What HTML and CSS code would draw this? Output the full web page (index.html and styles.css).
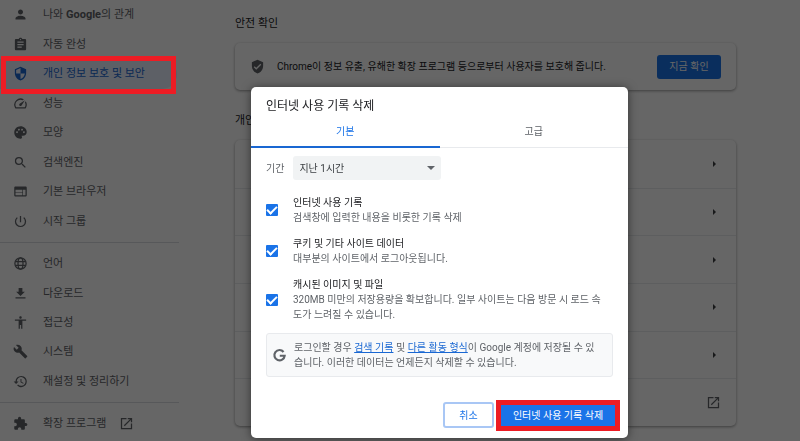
FILE: index.html
```html
<!DOCTYPE html>
<html lang="ko">
<head>
<meta charset="utf-8">
<title>설정</title>
<link rel="stylesheet" href="styles.css">
</head>
<body>
<div class="page">
  <nav class="sidebar">
    <ul class="nav-group nav-main">
      <li><a href="#people"><svg class="icon" viewBox="0 0 24 24"><path d="M12 12c2.21 0 4-1.79 4-4s-1.79-4-4-4-4 1.79-4 4 1.79 4 4 4zm0 2c-2.67 0-8 1.34-8 4v2h16v-2c0-2.66-5.33-4-8-4z"/></svg><span>나와 <b>Google</b>의 관계</span></a></li>
      <li><a href="#autofill"><svg class="icon" viewBox="0 0 24 24"><path d="M19 3h-4.18C14.4 1.84 13.3 1 12 1s-2.4.84-2.82 2H5c-1.1 0-2 .9-2 2v14c0 1.1.9 2 2 2h14c1.1 0 2-.9 2-2V5c0-1.1-.9-2-2-2zm-7 0c.55 0 1 .45 1 1s-.45 1-1 1-1-.45-1-1 .45-1 1-1zm2 14H7v-2h7v2zm3-4H7v-2h10v2zm0-4H7V7h10v2z"/></svg><span>자동 완성</span></a></li>
      <li class="selected"><a href="#privacy"><svg class="icon" viewBox="0 0 24 24"><path d="M12 1L3 5v6c0 5.55 3.84 10.74 9 12 5.16-1.26 9-6.45 9-12V5l-9-4zm0 10.99h7c-.53 4.12-3.28 7.79-7 8.94V12H5V6.3l7-3.11v8.8z"/></svg><span>개인 정보 보호 및 보안</span></a><i class="mark"></i></li>
      <li><a href="#performance"><svg class="icon" viewBox="0 0 24 24"><path d="M20.38 8.57l-1.23 1.85a8 8 0 0 1-.22 7.58H5.07A8 8 0 0 1 15.58 6.85l1.85-1.23A10 10 0 0 0 3.35 19a2 2 0 0 0 1.72 1h13.85a2 2 0 0 0 1.74-1 10 10 0 0 0-.27-10.44zm-9.79 6.84a2 2 0 0 0 2.83 0l5.66-8.49-8.49 5.66a2 2 0 0 0 0 2.83z"/></svg><span>성능</span></a></li>
      <li><a href="#appearance"><svg class="icon" viewBox="0 0 24 24"><path d="M12 2C6.49 2 2 6.49 2 12s4.49 10 10 10c1.38 0 2.5-1.12 2.5-2.5 0-.61-.23-1.2-.64-1.67-.08-.1-.13-.21-.13-.33 0-.28.22-.5.5-.5H16c3.31 0 6-2.69 6-6 0-4.96-4.49-9-10-9zm-5.5 11c-.83 0-1.5-.67-1.5-1.5S5.67 10 6.5 10s1.5.67 1.5 1.5S7.33 13 6.5 13zm3-4C8.67 9 8 8.33 8 7.5S8.67 6 9.5 6s1.500.67 1.500 1.500S10.330 9 9.500 9zm5 0c-.83 0-1.500-.67-1.500-1.500S13.670 6 14.500 6s1.500.67 1.500 1.500S15.330 9 14.500 9zm3 4c-.83 0-1.500-.67-1.500-1.500s.67-1.500 1.500-1.500 1.500.67 1.500 1.500-.67 1.500-1.500 1.500z"/></svg><span>모양</span></a></li>
      <li><a href="#search"><svg class="icon" viewBox="0 0 24 24"><path d="M15.5 14h-.79l-.28-.27A6.47 6.47 0 0 0 16 9.500 6.500 6.500 0 1 0 9.500 16c1.610 0 3.090-.59 4.230-1.570l.27.28v.79l5 4.990L20.490 19l-4.990-5zm-6 0C7.010 14 5 11.990 5 9.500S7.010 5 9.500 5 14 7.010 14 9.500 11.990 14 9.500 14z"/></svg><span>검색엔진</span></a></li>
      <li><a href="#browser"><svg class="icon" viewBox="0 0 24 24"><path d="M20 4H4c-1.100 0-2 .9-2 2v12c0 1.100.9 2 2 2h16c1.100 0 2-.9 2-2V6c0-1.100-.9-2-2-2zm-5 14H4v-4h11v4zm0-5H4V9h11v4zm5 5h-4V9h4v9z"/></svg><span>기본 브라우저</span></a></li>
      <li><a href="#startup"><svg class="icon" viewBox="0 0 24 24"><path d="M13 3h-2v10h2V3zm4.830 2.170l-1.420 1.420A6.920 6.920 0 0 1 19 12a7 7 0 1 1-11.420-5.420L6.170 5.170A8.930 8.930 0 0 0 3 12a9 9 0 0 0 18 0c0-2.740-1.230-5.180-3.170-6.830z"/></svg><span>시작 그룹</span></a></li>
    </ul>
    <ul class="nav-group nav-advanced">
      <li><a href="#languages"><svg class="icon line" viewBox="0 0 24 24"><circle cx="12" cy="12" r="9"/><ellipse cx="12" cy="12" rx="4" ry="9"/><path d="M4 9h16M4 15h16"/></svg><span>언어</span></a></li>
      <li><a href="#downloads"><svg class="icon" viewBox="0 0 24 24"><path d="M19 9h-4V3H9v6H5l7 7 7-7zM4 18v2h16v-2H4z"/></svg><span>다운로드</span></a></li>
      <li><a href="#accessibility"><svg class="icon" viewBox="0 0 24 24"><path d="M12 2c1.100 0 2 .9 2 2s-.9 2-2 2-2-.9-2-2 .9-2 2-2zm9 7h-6v13h-2v-6h-2v6H9V9H3V7h18v2z"/></svg><span>접근성</span></a></li>
      <li><a href="#system"><svg class="icon" viewBox="0 0 24 24"><path d="M22.700 19l-9.100-9.100c.9-2.300.4-5-1.500-6.900-2-2-5-2.400-7.400-1.300L9 6 6 9 1.600 4.700C.4 7.100.9 10.100 2.900 12.100c1.900 1.900 4.600 2.400 6.900 1.500l9.100 9.100c.4.4 1 .4 1.400 0l2.300-2.300c.5-.4.5-1.100.1-1.400z"/></svg><span>시스템</span></a></li>
      <li><a href="#reset"><svg class="icon" viewBox="0 0 24 24"><path d="M13 3a9 9 0 0 0-9 9H1l3.890 3.890.07.14L9 12H6a7 7 0 1 1 2.060 4.940l-1.420 1.420A9 9 0 1 0 13 3zm-1 5v5l4.280 2.540.72-1.210-3.500-2.080V8H12z"/></svg><span>재설정 및 정리하기</span></a></li>
    </ul>
    <ul class="nav-group nav-more">
      <li><a href="#extensions"><svg class="icon" viewBox="0 0 24 24"><path d="M20.500 11H19V7c0-1.100-.9-2-2-2h-4V3.500a2.500 2.500 0 0 0-5 0V5H4c-1.100 0-1.990.9-1.990 2v3.800H3.500a2.700 2.700 0 0 1 0 5.400H2V20c0 1.100.9 2 2 2h3.800v-1.500a2.700 2.700 0 0 1 5.400 0V22H17c1.100 0 2-.9 2-2v-4h1.500a2.500 2.500 0 0 0 0-5z"/></svg><span>확장 프로그램</span><svg class="icon external" viewBox="0 0 24 24"><path d="M19 19H5V5h7V3H3v18h18v-9h-2v7zM14 3v2h3.590l-9.830 9.830 1.410 1.410L19 6.410V10h2V3h-7z"/></svg></a></li>
    </ul>
  </nav>

  <main class="content">
    <h2>안전 확인</h2>
    <section class="card safety">
      <svg class="icon" viewBox="0 0 24 24"><path d="M12 1L3 5v6c0 5.550 3.840 10.740 9 12 5.160-1.260 9-6.450 9-12V5l-9-4zm-2 16l-4-4 1.410-1.410L10 14.170l6.590-6.590L18 9l-8 8z"/></svg>
      <p>Chrome이 정보 유출, 유해한 확장 프로그램 등으로부터 사용자를 보호해 줍니다.</p>
      <button class="button primary" type="button">지금 확인</button>
    </section>
    <h2>개인 정보 보호 및 보안</h2>
    <section class="card links">
      <div class="link-row"><i class="arrow"></i></div>
      <div class="link-row"><i class="arrow"></i></div>
      <div class="link-row"><i class="arrow"></i></div>
      <div class="link-row"><i class="arrow"></i></div>
      <div class="link-row"><i class="arrow"></i></div>
      <div class="link-row"><svg class="icon" viewBox="0 0 24 24"><path d="M19 19H5V5h7V3H3v18h18v-9h-2v7zM14 3v2h3.590l-9.830 9.830 1.410 1.410L19 6.410V10h2V3h-7z"/></svg></div>
    </section>
  </main>
</div>

<div class="backdrop"></div>

<div class="dialog" role="dialog" aria-labelledby="dialog-title">
  <h1 id="dialog-title">인터넷 사용 기록 삭제</h1>
  <div class="tabs" role="tablist">
    <button class="tab active" type="button" role="tab" aria-selected="true">기본</button>
    <button class="tab" type="button" role="tab" aria-selected="false">고급</button>
  </div>
  <form class="dialog-body">
    <div class="range">
      <label for="range">기간</label>
      <div class="select-box">
        <select id="range"><option>지난 1시간</option></select>
        <i class="caret"></i>
      </div>
    </div>
    <div class="option">
      <input type="checkbox" id="history" checked>
      <label for="history"><strong>인터넷 사용 기록</strong><span>검색창에 입력한 내용을 비롯한 기록 삭제</span></label>
    </div>
    <div class="option">
      <input type="checkbox" id="cookies" checked>
      <label for="cookies"><strong>쿠키 및 기타 사이트 데이터</strong><span>대부분의 사이트에서 로그아웃됩니다.</span></label>
    </div>
    <div class="option">
      <input type="checkbox" id="cache" checked>
      <label for="cache"><strong>캐시된 이미지 및 파일</strong><span>320MB 미만의 저장용량을 확보합니다. 일부 사이트는 다음 방문 시 로드 속도가 느려질 수 있습니다.</span></label>
    </div>
    <div class="notice">
      <svg class="google" viewBox="0 0 24 24"><path d="M19.500 5.500A9.500 9.500 0 1 0 21.500 12.500H12.500"/></svg>
      <p>로그인할 경우 <a href="#search-history">검색 기록</a> 및 <a href="#activity">다른 활동 형식</a>이 Google 계정에 저장될 수 있습니다. 이러한 데이터는 언제든지 삭제할 수 있습니다.</p>
    </div>
    <div class="actions">
      <button class="button cancel" type="button">취소</button>
      <div class="confirm">
        <button class="button primary" type="button">인터넷 사용 기록 삭제</button>
        <i class="mark"></i>
      </div>
    </div>
  </form>
</div>
</body>
</html>
```

FILE: styles.css
```css
* { box-sizing: border-box; }

html { overflow: hidden; }

body {
  margin: 0;
  background: #fff;
  color: #202124;
  font: 10px/15px Roboto, "Noto Sans CJK KR", sans-serif;
}

h1, h2, p, ul { margin: 0; padding: 0; }
ul { list-style: none; }
button, select { font: inherit; }

.icon {
  flex: none;
  width: 15px;
  height: 15px;
  fill: #5f6368;
}
.icon.line { fill: none; stroke: #5f6368; stroke-width: 2; }

.page {
  display: flex;
  height: 100vh;
  overflow: hidden;
}

/* Sidebar */
.sidebar {
  flex: none;
  width: 179px;
  font-size: 11px;
}
.nav-group {
  display: grid;
  grid-auto-rows: 1fr;
}
.nav-main { height: 236px; }
.nav-advanced,
.nav-more {
  margin-top: 6px;
  padding-top: 6px;
  border-top: 1px solid #dadce0;
}
.nav-advanced { height: 154px; }
.nav-more { height: 36px; }
.nav-group li { position: relative; }
.nav-group a {
  display: flex;
  align-items: center;
  height: 100%;
  margin-right: 2px;
  padding-left: 13px;
  gap: 15px;
  color: #5f6368;
  text-decoration: none;
}
.nav-group b { font-weight: 700; }
.nav-group .external { margin-left: -2px; }
.selected a {
  background: #e8f0fe;
  border-radius: 0 15px 15px 0;
  color: #1967d2;
}
.selected .icon { fill: #1967d2; }

/* Emphasis frames drawn above the backdrop */
.mark {
  position: absolute;
  z-index: 3;
  border: 5px solid #ed1c24;
  pointer-events: none;
}
.selected .mark { inset: -3px 3px -5px 1px; }

/* Settings content */
.content {
  flex: 1;
  padding: 16px 64px 0 56px;
}
.content h2 {
  font-size: 11px;
  line-height: 16px;
  font-weight: 400;
}
.card {
  margin: 11px 0 23px;
  background: #fff;
  border-radius: 5px;
  box-shadow: 0 1px 3px rgba(0, 0, 0, .4);
}
.safety {
  display: flex;
  align-items: center;
  height: 47px;
  padding: 0 15px;
}
.safety .icon { margin: 0 12px 0 0; }
.safety p { flex: 1; }
.links {
  display: grid;
  grid-auto-rows: 1fr;
  height: 286px;
}
.link-row {
  display: flex;
  align-items: center;
  justify-content: flex-end;
  padding-right: 15px;
}
.link-row + .link-row { border-top: 1px solid #e8eaed; }
.arrow {
  margin-right: 5px;
  border: 3px solid transparent;
  border-left-color: #3c4043;
  border-right: 0;
}

/* Buttons */
.button {
  border: 0;
  border-radius: 3px;
  padding: 0 12px;
  height: 24px;
  white-space: nowrap;
}
.primary {
  background: #1a73e8;
  color: #fff;
}
.safety .primary { min-width: 64px; }

.backdrop {
  position: fixed;
  inset: 0;
  z-index: 1;
  background: rgba(0, 0, 0, .6);
}

/* Dialog */
.dialog {
  position: absolute;
  z-index: 2;
  top: 87px;
  left: 251px;
  width: 377px;
  background: #fff;
  border-radius: 5px;
  box-shadow: 0 1px 10px rgba(0, 0, 0, .5);
}
.dialog h1 {
  padding: 11px 15px 7px;
  font-size: 12px;
  line-height: 16px;
  font-weight: 400;
}
.tabs {
  display: flex;
  border-bottom: 1px solid #e8eaed;
}
.tab {
  flex: 1;
  height: 27px;
  margin-bottom: -1px;
  padding: 0 0 4px;
  border: 0;
  border-bottom: 2px solid transparent;
  background: none;
  color: #5f6368;
}
.tab.active {
  border-color: #1967d2;
  color: #1a73e8;
}
.dialog-body { padding: 8px 15px 10px; }
.range {
  display: flex;
  align-items: center;
  gap: 9px;
  margin-bottom: 15px;
  color: #5f6368;
}
.select-box { position: relative; }
.select-box select {
  appearance: none;
  width: 148px;
  height: 24px;
  padding: 0 6px;
  border: 0;
  border-radius: 3px;
  background: #f1f3f4;
  color: #3c4043;
}
.caret {
  position: absolute;
  right: 6px;
  top: 10px;
  border: 4px solid transparent;
  border-top-color: #5f6368;
  border-bottom: 0;
}
.option {
  display: flex;
  align-items: center;
  gap: 15px;
  margin-bottom: 11px;
}
.option input {
  appearance: none;
  flex: none;
  display: grid;
  place-items: center;
  width: 12px;
  height: 12px;
  margin: 0;
  border-radius: 1px;
  background: #1a73e8;
}
.option input:checked::after {
  content: "";
  width: 8px;
  height: 4px;
  margin-bottom: 2px;
  border: solid #fff;
  border-width: 0 0 2px 2px;
  transform: rotate(-45deg);
}
.option strong,
.option span { display: block; }
.option strong { font-weight: 400; }
.option span { color: #5f6368; }
.option label { padding-right: 6px; }
.notice {
  display: flex;
  align-items: center;
  gap: 8px;
  padding: 6px 10px 6px 6px;
  border: 1px solid #e8eaed;
  border-radius: 3px;
  background: #f8f9fa;
  color: #5f6368;
}
.notice a { color: #1967d2; }
.google {
  flex: none;
  width: 13px;
  height: 13px;
  overflow: visible;
  fill: none;
  stroke: #5f6368;
  stroke-width: 4;
}
.actions {
  display: flex;
  justify-content: flex-end;
  gap: 4px;
  margin: 25px -5px 0 0;
}
.cancel {
  width: 51px;
  height: 26px;
  border: 2px solid #a9c7f5;
  background: #fff;
  color: #1a73e8;
}
.confirm { position: relative; }
.confirm .primary {
  width: 120px;
  height: 26px;
}
.confirm .mark { inset: -2px -2px -3px; }
```
